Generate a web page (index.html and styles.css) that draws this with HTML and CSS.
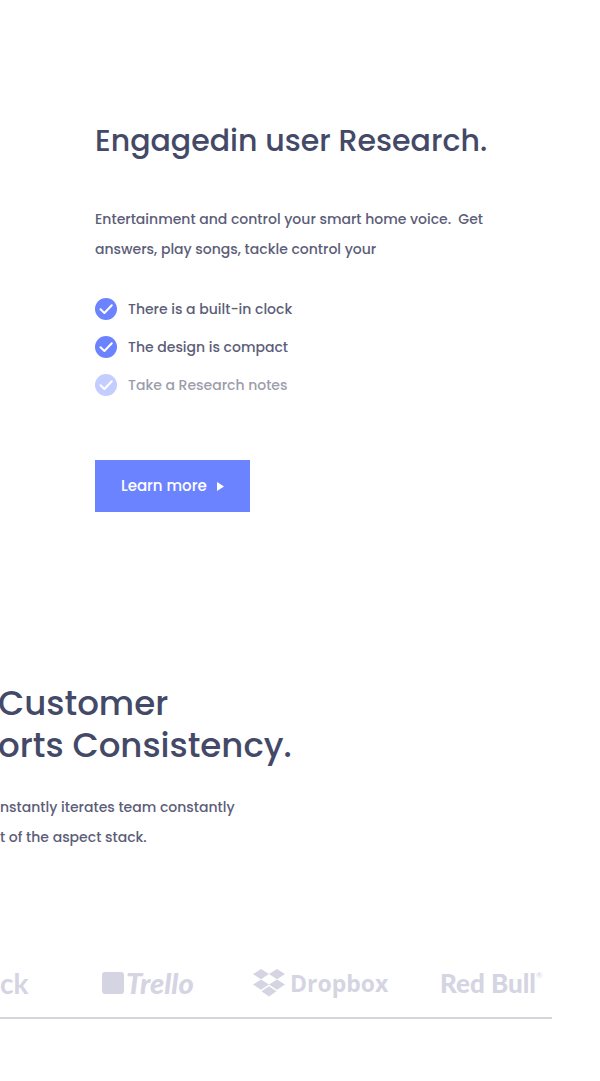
FILE: index.html
```html
<!DOCTYPE html>
<html lang="en">
<head>
<meta charset="utf-8">
<meta name="viewport" content="width=device-width, initial-scale=1">
<title>Engagedin user Research</title>
<link rel="stylesheet" href="styles.css">
</head>
<body>
<main>
  <section class="feature">
    <h1 class="feature-title">Engagedin user Research.</h1>
    <p class="copy">Entertainment and control your smart home voice.&nbsp; Get<br>answers, play songs, tackle control your</p>
    <ul class="checks">
      <li class="check">
        <svg class="check-icon" viewBox="0 0 22 22" aria-hidden="true"><circle cx="11" cy="11" r="11"/><path d="M5.5 11.3 9.4 15 16.8 7.3"/></svg>
        <span>There is a built-in clock</span>
      </li>
      <li class="check">
        <svg class="check-icon" viewBox="0 0 22 22" aria-hidden="true"><circle cx="11" cy="11" r="11"/><path d="M5.5 11.3 9.4 15 16.8 7.3"/></svg>
        <span>The design is compact</span>
      </li>
      <li class="check check-muted">
        <svg class="check-icon" viewBox="0 0 22 22" aria-hidden="true"><circle cx="11" cy="11" r="11"/><path d="M5.5 11.3 9.4 15 16.8 7.3"/></svg>
        <span>Take a Research notes</span>
      </li>
    </ul>
    <button class="button" type="button">Learn more
      <svg class="button-arrow" viewBox="0 0 7 9" aria-hidden="true"><path d="M0 0 7 4.5 0 9Z"/></svg>
    </button>
  </section>

  <section class="customers">
    <h2 class="customers-title">Customer<br>orts Consistency.</h2>
    <p class="copy">nstantly iterates team constantly<br>t of the aspect stack.</p>
  </section>

  <section class="brands" aria-label="Customers">
    <div class="brand brand-slack">ck</div>
    <div class="brand brand-trello">
      <svg class="trello-mark" viewBox="0 0 22 22" aria-hidden="true"><rect width="22" height="22" rx="3"/></svg>
      <span>Trello</span>
    </div>
    <div class="brand brand-dropbox">
      <svg class="dropbox-mark" viewBox="0 0 32 28" aria-hidden="true"><path d="M8 0 16 5 8 10.2 0 5ZM24 0 32 5 24 10.2 16 5ZM8 10.4 16 15.6 8 20.8 0 15.6ZM24 10.4 32 15.6 24 20.8 16 15.6ZM16 17.3 23.5 22.3 16 27.4 8.5 22.3Z"/></svg>
      <span>Dropbox</span>
    </div>
    <div class="brand brand-redbull">Red Bull<sup class="registered">®</sup></div>
  </section>
</main>
</body>
</html>
```

FILE: styles.css
```css
* {
  box-sizing: border-box;
}

body {
  margin: 0;
  background: #fff;
  color: #5c5d78;
  font-family: Poppins, Inter, sans-serif;
  font-size: 14px;
  font-weight: 500;
}

h1,
h2,
p,
ul {
  margin: 0;
  padding: 0;
}

.feature {
  padding: 117px 40px 0 95px;
}

.feature-title {
  color: #434967;
  font-size: 30px;
  font-weight: 500;
  line-height: 48px;
  white-space: nowrap;
}

.copy {
  line-height: 30px;
  white-space: nowrap;
}

.feature .copy {
  margin-top: 39px;
}

.checks {
  display: grid;
  gap: 16px;
  margin-top: 34px;
  list-style: none;
}

.check {
  display: flex;
  align-items: center;
  gap: 11px;
  line-height: 22px;
}

.check-icon {
  width: 22px;
  height: 22px;
  fill: #6c83ff;
}

.check-icon path {
  fill: none;
  stroke: #fff;
  stroke-width: 2;
  stroke-linecap: round;
  stroke-linejoin: round;
}

.check-muted {
  color: #9c9dab;
}

.check-muted .check-icon {
  fill: #c4cdff;
}

.button {
  display: flex;
  align-items: center;
  gap: 10px;
  margin-top: 64px;
  padding: 15px 26px;
  border: 0;
  background: #6c83ff;
  color: #fff;
  font: inherit;
  font-size: 15px;
  line-height: 22px;
}

.button-arrow {
  width: 7px;
  height: 9px;
  fill: #fff;
}

.customers {
  padding-top: 170px;
}

.customers-title {
  margin-left: -2px;
  color: #434967;
  font-size: 34px;
  font-weight: 500;
  line-height: 42px;
  white-space: nowrap;
}

.customers .copy {
  margin-top: 26px;
}

.brands {
  display: grid;
  grid-template-columns: 102px 151px 187px 1fr;
  align-items: center;
  height: 70px;
  margin: 97px 48px 62px 0;
  border-bottom: 2px solid #d3d7dc;
}

.brand {
  display: flex;
  align-items: center;
  color: #d5d4e2;
  font-weight: 700;
  line-height: 32px;
  white-space: nowrap;
}

.brand svg {
  fill: #d5d4e2;
}

.brand-slack {
  font-family: Lato, sans-serif;
  font-size: 28px;
}

.brand-trello {
  gap: 2px;
  font-family: Lato, sans-serif;
  font-size: 29px;
  font-style: italic;
  font-weight: 900;
}

.trello-mark {
  width: 22px;
  height: 22px;
}

.brand-dropbox {
  gap: 5px;
  font-family: "Open Sans", sans-serif;
  font-size: 23px;
}

.dropbox-mark {
  width: 32px;
  height: 28px;
}

.brand-redbull {
  font-family: Lato, sans-serif;
  font-size: 26px;
  font-weight: 900;
}

.registered {
  align-self: flex-start;
  font-size: 8px;
  font-weight: 400;
  line-height: 16px;
}
```
